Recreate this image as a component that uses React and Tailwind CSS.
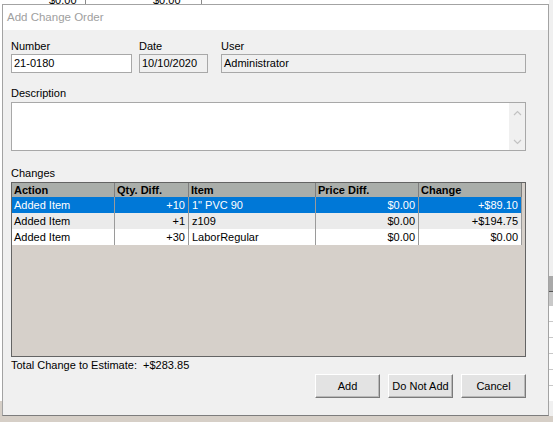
const rows = [
  { action: 'Added Item', qty: '+10', item: '1" PVC 90', price: '$0.00', change: '+$89.10', bg: 'bg-[#0078d7] text-white' },
  { action: 'Added Item', qty: '+1', item: 'z109', price: '$0.00', change: '+$194.75', bg: 'bg-[#ebebeb] text-black' },
  { action: 'Added Item', qty: '+30', item: 'LaborRegular', price: '$0.00', change: '$0.00', bg: 'bg-white text-black' },
];

const cols = [
  { label: 'Action', key: 'action', w: 'w-[103px]', align: 'text-left pl-[2px]' },
  { label: 'Qty. Diff.', key: 'qty', w: 'w-[74px]', align: 'text-right pr-[3px]' },
  { label: 'Item', key: 'item', w: 'w-[127px]', align: 'text-left pl-[3px]' },
  { label: 'Price Diff.', key: 'price', w: 'w-[103px]', align: 'text-right pr-[3px]' },
  { label: 'Change', key: 'change', w: 'w-[103px]', align: 'text-right pr-[3px]' },
];

function Button({ children }) {
  return (
    <button className="w-[65px] h-[24px] bg-[#e3e3e3] border border-t-white border-l-white border-r-[#7a7a7a] border-b-[#7a7a7a] shadow-[inset_-1px_-1px_0_#b9b9b9] text-[11px] leading-[13px] text-black">
      {children}
    </button>
  );
}

function Chevron({ up }) {
  return (
    <svg width="9" height="6" viewBox="0 0 9 6" className="block">
      <path d={up ? 'M1 5 L4.5 1.5 L8 5' : 'M1 1 L4.5 4.5 L8 1'} fill="none" stroke="#c2c2c2" strokeWidth="1.2" />
    </svg>
  );
}

export default function App() {
  return (
    <div className="relative w-[553px] h-[422px] overflow-hidden bg-white font-['Liberation_Sans',Arial,sans-serif] text-[11px] leading-[13px] text-black">
      {/* window behind the dialog */}
      <div className="absolute left-[49px] top-[-6px] text-black">$0.00</div>
      <div className="absolute left-[85px] top-0 w-px h-[4px] bg-[#8a8a8a]" />
      <div className="absolute left-[153px] top-[-6px] text-black">$0.00</div>
      <div className="absolute left-[201px] top-0 w-px h-[4px] bg-[#8a8a8a]" />
      <div className="absolute left-[549px] top-0 w-[4px] h-[276px] bg-[#f0f0f0]" />
      <div className="absolute left-[549px] top-[276px] w-[4px] h-[15px] bg-[#a9a9a9]" />
      <div className="absolute left-[549px] top-[291px] w-[4px] h-px bg-[#555]" />
      <div className="absolute left-[549px] top-[292px] w-[4px] h-[13px] bg-[#c9c9c9]" />
      <div className="absolute left-[549px] top-[305px] w-[4px] h-[96px] bg-white" />
      {[305, 321, 337, 353, 369, 385].map((y) => (
        <div key={y} className="absolute left-[549px] w-[4px] h-px bg-[#c8c8c8]" style={{ top: y }} />
      ))}
      <div className="absolute left-[549px] top-[401px] w-[4px] h-[15px] bg-[#f0f0f0]" />
      <div className="absolute left-0 top-[401px] w-[2px] h-[21px] bg-[#d6cfc7]" />
      <div className="absolute left-0 top-[416px] w-[553px] h-[6px] bg-[#d6cfc7]" />

      {/* dialog */}
      <div className="absolute left-[2px] top-[4px] w-[547px] h-[412px] border border-[#a3a3a3] border-b-[#7d7d7d] bg-[#f0f0f0] flex flex-col">
        <div className="h-[25px] bg-white pl-[4px] pt-[6px] text-[#a0a0a0] text-[11.5px] leading-[13px]">Add Change Order</div>

        <div className="flex flex-col pl-[8px] pr-[22px]">
          <div className="flex mt-[10px]">
            <div className="w-[121px] mr-[7px] flex flex-col">
              <div className="h-[13px]">Number</div>
              <div className="mt-[1px] h-[19px] bg-white border border-[#a8a8a8] pl-[2px] leading-[17px]">21-0180</div>
            </div>
            <div className="w-[69px] mr-[13px] flex flex-col">
              <div className="h-[13px]">Date</div>
              <div className="mt-[1px] h-[19px] bg-[#f0f0f0] border border-[#a8a8a8] pl-[2px] leading-[17px]">10/10/2020</div>
            </div>
            <div className="flex-1 flex flex-col">
              <div className="h-[13px]">User</div>
              <div className="mt-[1px] h-[19px] bg-[#f0f0f0] border border-[#a8a8a8] pl-[2px] leading-[17px]">Administrator</div>
            </div>
          </div>

          <div className="mt-[14px] h-[13px]">Description</div>
          <div className="mt-[2px] h-[49px] bg-white border border-[#a8a8a8] flex justify-end">
            <div className="w-[16px] h-full bg-[#f0f0f0] flex flex-col items-center justify-between pt-[7px] pb-[5px]">
              <Chevron up />
              <Chevron />
            </div>
          </div>

          <div className="mt-[16px] h-[13px]">Changes</div>
          <div className="mt-[2px] h-[175px] border border-[#646464] bg-[#d6d0ca]">
            <div className="flex h-[14px] bg-[#aaaeaa] w-[510px]">
              {cols.map((c) => (
                <div key={c.key} className={`${c.w} h-full border-r border-[#7e7e7e] font-bold leading-[14px] text-left ${c.key === 'action' ? 'pl-[2px]' : 'pl-[2px]'}`}>
                  {c.label}
                </div>
              ))}
            </div>
            {rows.map((r, i) => (
              <div key={i} className={`flex h-[16px] w-[510px] ${r.bg}`}>
                {cols.map((c) => (
                  <div key={c.key} className={`${c.w} h-full border-r border-[#9a9a9a] leading-[16px] whitespace-nowrap overflow-hidden ${c.align}`}>
                    {r[c.key]}
                  </div>
                ))}
              </div>
            ))}
          </div>

          <div className="mt-[2px] h-[13px] whitespace-pre">Total Change to Estimate:  +$283.85</div>

          <div className="mt-[2px] flex justify-end gap-[8px]">
            <Button>Add</Button>
            <Button>Do Not Add</Button>
            <Button>Cancel</Button>
          </div>
        </div>
      </div>
    </div>
  );
}
